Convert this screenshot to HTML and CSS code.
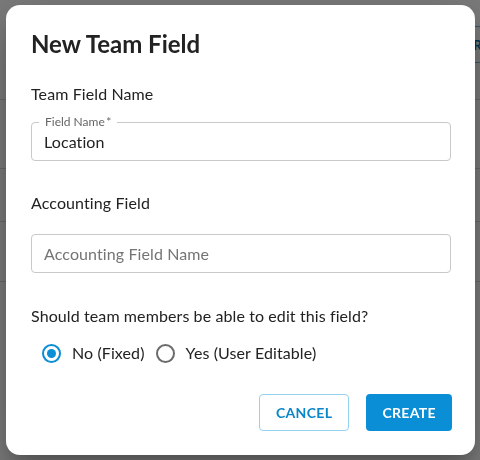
FILE: index.html
```html
<!DOCTYPE html>
<html>
<head>
<meta charset="utf-8">
<link rel="stylesheet" href="styles.css">
</head>
<body>
<div class="page">
  <div class="toolbar">
    <span class="tool-btn">R</span>
  </div>
  <div class="rows">
    <div class="row r1"></div>
    <div class="row r2"></div>
    <div class="row r3"></div>
    <div class="row r4"></div>
  </div>
</div>
<div class="overlay"></div>
<div class="dialog">
  <h2 class="title">New Team Field</h2>
  <div class="label first">Team Field Name</div>
  <div class="field filled">
    <span class="legend">Field Name&thinsp;*</span>
    <span class="value">Location</span>
  </div>
  <div class="label second">Accounting Field</div>
  <div class="field empty">
    <span class="placeholder">Accounting Field Name</span>
  </div>
  <div class="label third">Should team members be able to edit this field?</div>
  <div class="radios">
    <span class="radio checked"><span class="dot"></span></span>
    <span class="radio-label">No (Fixed)</span>
    <span class="radio"></span>
    <span class="radio-label">Yes (User Editable)</span>
  </div>
  <div class="actions">
    <span class="btn outline">CANCEL</span>
    <span class="btn solid">CREATE</span>
  </div>
</div>
</body>
</html>
```
FILE: styles.css
```css
* { box-sizing: border-box; }
html, body { margin: 0; padding: 0; }
body {
  width: 480px;
  height: 460px;
  overflow: hidden;
  background: #ffffff;
  font-family: Lato, "Open Sans", sans-serif;
  color: #222;
}
.page { height: 460px; }
.toolbar {
  height: 100px;
  padding-top: 26px;
  padding-left: 440px;
  display: flex;
  border-bottom: 1px solid #d8d8d8;
}
.tool-btn {
  height: 37px;
  padding: 0 0 0 32px;
  width: 60px;
  display: flex;
  align-items: center;
  border: 1px solid #6fb4d8;
  border-radius: 4px;
  color: #0a6ea6;
  font-weight: 700;
  font-size: 14px;
}
.row { border-bottom: 1px solid #d8d8d8; }
.r1 { height: 69px; }
.r2 { height: 53px; }
.r3 { height: 60px; }
.r4 { height: 60px; border-bottom: none; }
.overlay {
  position: fixed;
  inset: 0;
  background: rgba(0, 0, 0, 0.52);
}
.dialog {
  position: fixed;
  left: 6px;
  top: 5px;
  width: 469px;
  height: 450px;
  background: #fff;
  border-radius: 14px;
  padding: 25px 24px 0 25px;
  display: flex;
  flex-direction: column;
  box-shadow: 0 11px 15px -7px rgba(0,0,0,.2), 0 24px 38px 3px rgba(0,0,0,.14), 0 9px 46px 8px rgba(0,0,0,.12);
}
.title {
  margin: 0;
  font-size: 24px;
  line-height: 28px;
  font-weight: 700;
  color: #222;
}
.label {
  font-size: 16px;
  line-height: 20px;
  letter-spacing: 0.1px;
  color: #222;
}
.label.first { margin-top: 26px; }
.label.second { margin-top: 32px; }
.label.third { margin-top: 33px; }
.field {
  position: relative;
  height: 39px;
  border: 1px solid #c9c9c9;
  border-radius: 4px;
  display: flex;
  align-items: center;
  padding: 0 12px;
  font-size: 16px;
  line-height: 20px;
  letter-spacing: 0.1px;
}
.filled { margin-top: 18px; }
.empty { margin-top: 21px; }
.legend {
  position: absolute;
  left: 7px;
  top: -8px;
  padding: 0 6px;
  background: #fff;
  font-size: 12px;
  line-height: 14px;
  letter-spacing: 0;
  color: #666;
}
.value { color: #222; }
.placeholder { color: #757575; }
.radios {
  margin-top: 15px;
  height: 24px;
  display: flex;
  align-items: center;
  padding-left: 11px;
  font-size: 16px;
  line-height: 24px;
  letter-spacing: 0.1px;
}
.radio {
  width: 19px;
  height: 19px;
  border: 2px solid #6b6b6b;
  border-radius: 50%;
  display: flex;
  align-items: center;
  justify-content: center;
  flex: none;
}
.radio.checked { border-color: #0a8ed6; }
.dot {
  width: 9px;
  height: 9px;
  border-radius: 50%;
  background: #0a8ed6;
}
.radio-label {
  margin-left: 11px;
  margin-right: 11px;
  color: #222;
}
.actions {
  margin-top: 29px;
  display: flex;
  justify-content: flex-end;
  gap: 17px;
  margin-right: -1px;
}
.btn {
  height: 37px;
  padding: 0 16px;
  display: flex;
  align-items: center;
  border-radius: 4px;
  font-size: 14px;
  font-weight: 700;
  letter-spacing: 0.35px;
}
.outline {
  border: 1px solid #95d0ef;
  color: #0b86c8;
}
.solid {
  background: #0a8ed6;
  color: #fff;
}
```
